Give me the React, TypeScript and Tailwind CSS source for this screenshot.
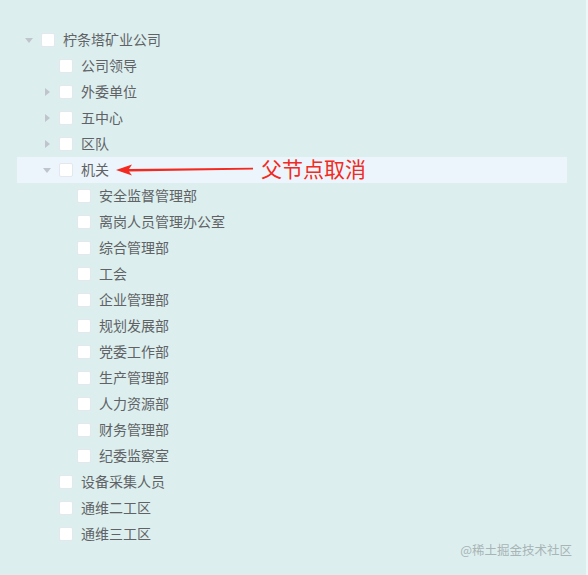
import React from "react";

type Node = { label: string; level: number; caret?: "open" | "closed"; active?: boolean };

const nodes: Node[] = [
  { label: "柠条塔矿业公司", level: 0, caret: "open" },
  { label: "公司领导", level: 1 },
  { label: "外委单位", level: 1, caret: "closed" },
  { label: "五中心", level: 1, caret: "closed" },
  { label: "区队", level: 1, caret: "closed" },
  { label: "机关", level: 1, caret: "open", active: true },
  { label: "安全监督管理部", level: 2 },
  { label: "离岗人员管理办公室", level: 2 },
  { label: "综合管理部", level: 2 },
  { label: "工会", level: 2 },
  { label: "企业管理部", level: 2 },
  { label: "规划发展部", level: 2 },
  { label: "党委工作部", level: 2 },
  { label: "生产管理部", level: 2 },
  { label: "人力资源部", level: 2 },
  { label: "财务管理部", level: 2 },
  { label: "纪委监察室", level: 2 },
  { label: "设备采集人员", level: 1 },
  { label: "通维二工区", level: 1 },
  { label: "通维三工区", level: 1 },
];

const font = { fontFamily: '"Noto Sans CJK SC", "Liberation Sans", sans-serif' };

function Caret({ kind }: { kind?: "open" | "closed" }) {
  return (
    <span className="flex h-[26px] w-[24px] items-center justify-center">
      {kind === "open" && (
        <svg width="8" height="5" viewBox="0 0 8 5">
          <path d="M0 0 L8 0 L4 5 Z" fill="#c0c4cc" />
        </svg>
      )}
      {kind === "closed" && (
        <svg width="5" height="8" viewBox="0 0 5 8">
          <path d="M0 0 L5 4 L0 8 Z" fill="#c0c4cc" />
        </svg>
      )}
    </span>
  );
}

export default function App() {
  return (
    <div className="relative h-[575px] w-[588px] overflow-hidden bg-[#dcefee]" style={font}>
      <div className="pl-[17px] pt-[27px]">
        {nodes.map((n) => (
          <div
            key={n.label}
            className={`relative flex h-[26px] w-[550px] items-center ${n.active ? "bg-[#ecf5fb]" : ""}`}
            style={{ paddingLeft: n.level * 18 }}
          >
            <Caret kind={n.caret} />
            <span className="mr-[8px] h-[14px] w-[14px] rounded-[2px] border border-[#e4e7ed] bg-white" />
            <span className="-mt-[2px] text-[14px] leading-none text-[#606266]">{n.label}</span>
            {n.active && (
              <div className="absolute left-[99px] top-0 flex h-[26px] items-center">
                <svg width="138" height="12" viewBox="0 0 138 12">
                  <path d="M0 6 L16 0.5 L13 5 L137 3.8 L137 5.4 L13 7.6 L16 11.5 Z" fill="#f22a22" />
                </svg>
                <span className="-mt-[3px] ml-[7px] text-[21px] leading-none text-[#f22a22]">父节点取消</span>
              </div>
            )}
          </div>
        ))}
      </div>
      <div className="absolute right-0 top-0 h-full w-[2px] bg-[#eef7f7]" />
      <div className="absolute bottom-[15px] right-[16px] text-[12.5px] text-[#a9b4b6]">@稀土掘金技术社区</div>
    </div>
  );
}
